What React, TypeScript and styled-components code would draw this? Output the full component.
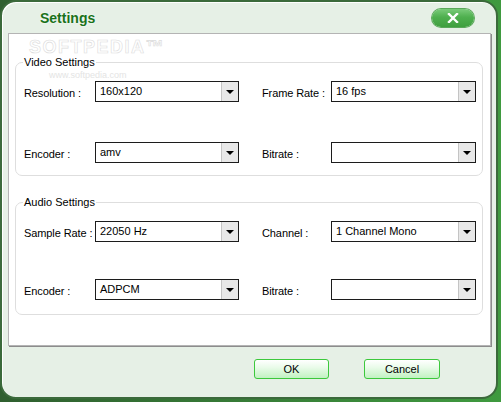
import React from 'react';
import styled, { createGlobalStyle } from 'styled-components';

const Global = createGlobalStyle`
  html, body { margin: 0; padding: 0; }
  body {
    background: linear-gradient(90deg, #2f5f2f 0, #3f9a3f 100%);
    width: 501px;
    height: 402px;
    overflow: hidden;
    font-family: "Liberation Sans", Arial, sans-serif;
  }
`;

const Window = styled.div`
  position: relative;
  box-sizing: border-box;
  width: 498px;
  height: 399px;
  border: 2px solid #3b6a3b;
  border-radius: 16px;
  background: #e6f0e6;
  box-shadow: inset 1px 1px 0 #ffffff;
  display: flex;
  flex-direction: column;
  overflow: hidden;
`;

const TitleBar = styled.div`
  height: 31px;
  display: flex;
  align-items: center;
  justify-content: space-between;
  padding: 0 22px 0 38px;
`;

const Title = styled.div`
  font-family: "Liberation Sans", Arial, sans-serif;
  font-weight: bold;
  font-size: 14px;
  color: #1a721a;
  text-shadow: 0 0 2px #ffffff;
  margin-top: 1px;
`;

const CloseButton = styled.div`
  width: 42px;
  height: 18px;
  margin-top: 1px;
  border-radius: 9px;
  background: linear-gradient(180deg, #7acb7a 0%, #4fb04f 45%, #3f9f3f 100%);
  box-shadow: 0 0 0 1px #5aa85a;
  display: flex;
  align-items: center;
  justify-content: center;
`;

const Panel = styled.div`
  position: relative;
  box-sizing: border-box;
  width: 483px;
  height: 313px;
  margin-left: 6px;
  border: 1px solid #b4b4b4;
  box-shadow: 1px 1px 0 #8c8c8c;
  background: #ffffff;
  padding: 21px 0 0 6px;
  display: flex;
  flex-direction: column;
`;

const Group = styled.fieldset<{ $top: number; $bottom: number }>`
  box-sizing: border-box;
  width: 468px;
  margin: ${(p) => p.$top}px 0 0 0;
  padding: 0 0 ${(p) => p.$bottom}px 8px;
  border: 1px solid #dedede;
  border-radius: 7px;
  min-inline-size: 0;
`;

const Legend = styled.legend`
  font-size: 11px;
  line-height: 14px;
  padding: 0 1px;
  margin-left: -1px;
  color: #000;
`;

const Grid = styled.div<{ $rowGap: number }>`
  display: grid;
  grid-template-columns: 71px 144px 23px 69px 145px;
  row-gap: ${(p) => p.$rowGap}px;
  align-items: center;
  margin-top: 12px;
`;

const Label = styled.div<{ $col: number }>`
  grid-column: ${(p) => p.$col};
  font-size: 11px;
  color: #000;
  padding-top: 2px;
  white-space: nowrap;
  letter-spacing: -0.1px;
`;

const Combo = styled.div<{ $col: number }>`
  grid-column: ${(p) => p.$col};
  box-sizing: border-box;
  height: 21px;
  border: 1px solid #1c1c1c;
  background: #fff;
  display: flex;
  align-items: stretch;
`;

const ComboText = styled.div`
  flex: 1;
  font-size: 11px;
  line-height: 19px;
  padding-left: 4px;
  color: #000;
  white-space: nowrap;
  overflow: hidden;
`;

const ComboButton = styled.div`
  width: 16px;
  background: #e8e8e8;
  border-left: 1px solid #c4c4c4;
  display: flex;
  align-items: center;
  justify-content: center;
`;

const Arrow = styled.div`
  width: 0;
  height: 0;
  border-left: 4px solid transparent;
  border-right: 4px solid transparent;
  border-top: 4px solid #000;
`;

const Footer = styled.div`
  display: flex;
  justify-content: flex-end;
  gap: 35px;
  padding: 13px 56px 0 0;
`;

const Button = styled.div<{ $w: number }>`
  box-sizing: border-box;
  width: ${(p) => p.$w}px;
  height: 20px;
  border: 1px solid #3cc83c;
  border-radius: 3px;
  background: linear-gradient(180deg, #ffffff 0%, #eafbea 40%, #c2f2c2 100%);
  font-size: 11px;
  color: #000;
  display: flex;
  align-items: center;
  justify-content: center;
`;

const Watermark = styled.div`
  position: absolute;
  left: 20px;
  top: 6px;
  font-size: 18px;
  line-height: 14px;
  font-weight: bold;
  letter-spacing: 1.5px;
  color: #ffffff;
  -webkit-text-stroke: 0.6px #dcdcdc;
  pointer-events: none;
`;

const WatermarkSmall = styled.div`
  position: absolute;
  left: 40px;
  top: 37px;
  font-size: 9px;
  line-height: 9px;
  color: #e4e4e4;
  pointer-events: none;
`;

type Field = { label: string; value: string };

const Row: React.FC<{ left: Field; right: Field }> = ({ left, right }) => (
  <>
    <Label $col={1}>{left.label}</Label>
    <Combo $col={2}>
      <ComboText>{left.value}</ComboText>
      <ComboButton>
        <Arrow />
      </ComboButton>
    </Combo>
    <Label $col={4}>{right.label}</Label>
    <Combo $col={5}>
      <ComboText>{right.value}</ComboText>
      <ComboButton>
        <Arrow />
      </ComboButton>
    </Combo>
  </>
);

export default function App() {
  return (
    <>
      <Global />
      <Window>
        <TitleBar>
          <Title>Settings</Title>
          <CloseButton>
            <svg width="12" height="10" viewBox="0 0 12 10">
              <path d="M2 1 L10 9 M10 1 L2 9" stroke="#fff" strokeWidth="2.4" strokeLinecap="square" />
            </svg>
          </CloseButton>
        </TitleBar>
        <Panel>
          <Watermark>SOFTPEDIA™</Watermark>
          <WatermarkSmall>www.softpedia.com</WatermarkSmall>
          <Group $top={0} $bottom={12}>
            <Legend>Video Settings</Legend>
            <Grid $rowGap={40}>
              <Row
                left={{ label: 'Resolution :', value: '160x120' }}
                right={{ label: 'Frame Rate :', value: '16 fps' }}
              />
              <Row
                left={{ label: 'Encoder :', value: 'amv' }}
                right={{ label: 'Bitrate :', value: '' }}
              />
            </Grid>
          </Group>
          <Group $top={19} $bottom={14}>
            <Legend>Audio Settings</Legend>
            <Grid $rowGap={37}>
              <Row
                left={{ label: 'Sample Rate :', value: '22050 Hz' }}
                right={{ label: 'Channel :', value: '1 Channel Mono' }}
              />
              <Row
                left={{ label: 'Encoder :', value: 'ADPCM' }}
                right={{ label: 'Bitrate :', value: '' }}
              />
            </Grid>
          </Group>
        </Panel>
        <Footer>
          <Button $w={75}>OK</Button>
          <Button $w={76}>Cancel</Button>
        </Footer>
      </Window>
    </>
  );
}
